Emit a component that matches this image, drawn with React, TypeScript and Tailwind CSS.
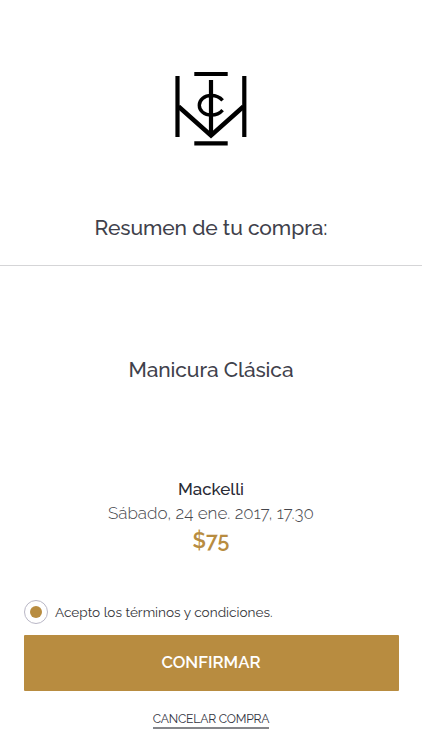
import { useState } from 'react';

function Logo() {
  return (
    <svg width="72" height="74" viewBox="0 0 72 74" fill="none" stroke="#000" className="block" aria-hidden>
      <path d="M19.3 2h33.4M19.3 71.3h33.4M2.5 4v61M69.3 4v61M36 8v56" strokeWidth="4.2" />
      <path d="M3.5 34.5 36 63.5l32.5-29" strokeWidth="4.5" />
      <path d="M47.6 28.4C44.8 25.1 40.5 23.5 36.2 23.5C29.3 23.5 24.3 27.8 24.3 33.3C24.3 38.9 29.3 43.1 36.2 43.1C40.5 43.1 44.8 41.5 47.6 38.2" strokeWidth="3.4" />
    </svg>
  );
}

export default function App() {
  const [accepted, setAccepted] = useState(true);

  return (
    <main className="flex h-[750px] w-full flex-col items-center bg-white font-['Raleway','Lato',sans-serif] text-[#40414b]">
      <header className="flex h-[266px] w-full flex-col items-center border-b border-[#d5d5d7] pt-[72px]">
        <Logo />
        <h1 className="mt-[67px] whitespace-nowrap text-[21px] font-medium leading-[30px] tracking-[-0.08px]">
          Resumen de tu compra:
        </h1>
      </header>

      <h2 className="mt-[89px] whitespace-nowrap text-[21px] font-medium leading-[30px] tracking-[-0.08px]">
        Manicura Clásica
      </h2>

      <section className="mt-[92px] flex flex-col items-center whitespace-nowrap">
        <p className="text-[17px] font-medium leading-6 text-[#292a34]">Mackelli</p>
        <p className="text-[17px] font-light leading-6 text-[#45464b]">Sábado, 24 ene. 2017, 17.30</p>
        <p className="mt-px text-[21.5px] font-semibold leading-[30px] text-[#b88c40]">$75</p>
      </section>

      <div className="mt-auto flex w-full flex-col px-[23.5px]">
        <button
          type="button"
          role="radio"
          aria-checked={accepted}
          onClick={() => setAccepted(!accepted)}
          className="flex h-6 items-center gap-[7.5px] self-start"
        >
          <span className="flex size-6 items-center justify-center rounded-full border border-[#b9b7c6]">
            {accepted && <span className="size-3 rounded-full bg-[#b88c40]" />}
          </span>
          <span className="whitespace-nowrap text-[13.6px] font-[450] leading-[23px] text-[#36373b]">
            Acepto los términos y condiciones.
          </span>
        </button>
        <button type="button" className="mt-[11px] h-14 rounded-[1px] bg-[#b88c40] text-[16.8px] font-semibold text-white">
          CONFIRMAR
        </button>
        <button
          type="button"
          className="mb-[21px] mt-[18px] h-5 self-center whitespace-nowrap border-b-2 border-[#85868a] pt-px text-[12.2px] font-[450] leading-[18px] tracking-[-0.22px] text-[#33343f]"
        >
          CANCELAR COMPRA
        </button>
      </div>
    </main>
  );
}
